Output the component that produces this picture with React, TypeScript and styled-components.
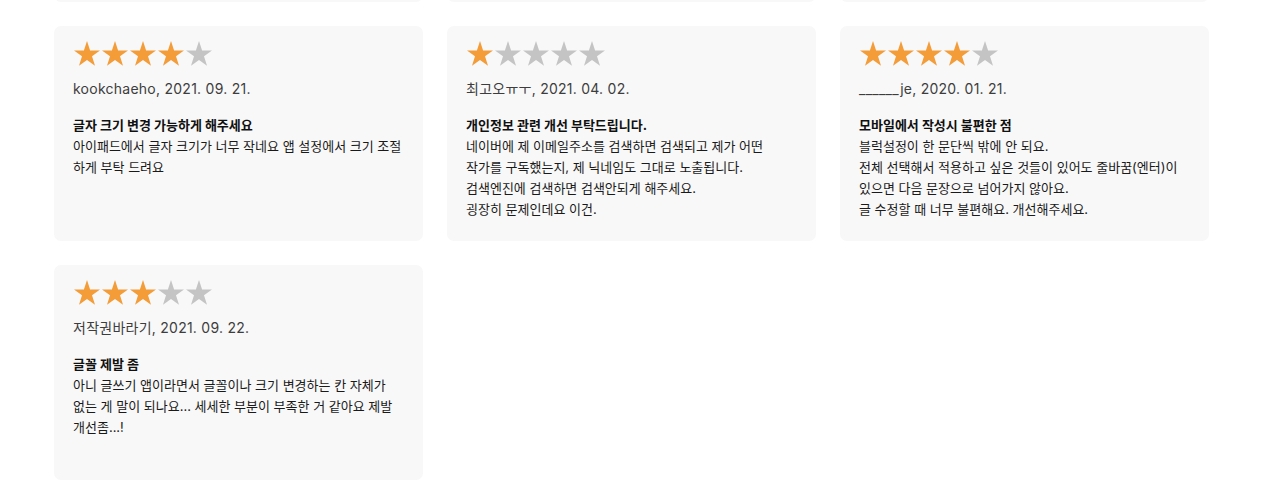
import React from "react";
import styled, { createGlobalStyle } from "styled-components";

const Global = createGlobalStyle`
  html, body { margin: 0; padding: 0; background: #ffffff; }
  body { font-family: "Inter", "Noto Sans CJK KR", sans-serif; overflow: hidden; }
`;

const Page = styled.div`
  height: 492px;
  overflow: hidden;
  padding-left: 54px;
`;

const Grid = styled.div`
  display: grid;
  grid-template-columns: repeat(3, 369px);
  grid-auto-rows: 215px;
  gap: 24px;
  margin-top: -213px;
`;

const Card = styled.div`
  background: #f8f8f8;
  border-radius: 7px;
  padding: 14px 19px;
  box-sizing: border-box;
  display: flex;
  flex-direction: column;
`;

const Stars = styled.div`
  display: flex;
  height: 28px;
`;

const Author = styled.div`
  margin-top: 11px;
  font-size: 14px;
  line-height: 20px;
  color: #3d3d3d;
  letter-spacing: 0.25px;
`;

const Title = styled.div`
  margin-top: 16px;
  font-size: 13px;
  line-height: 21px;
  font-weight: 700;
  color: #111;
`;

const Body = styled.div`
  font-size: 13px;
  line-height: 21px;
  color: #1a1a1a;
  white-space: pre-line;
`;

const Star = ({ on }: { on: boolean }) => (
  <svg width="28" height="28" viewBox="0 0 28 28">
    <polygon
      points="14,1 17.1,10.4 27,10.4 19,16.3 22,25.8 14,20 6,25.8 9,16.3 1,10.4 10.9,10.4"
      fill={on ? "#f39c38" : "#c4c4c4"}
    />
  </svg>
);

type Review = { rating: number; author: string; date: string; title: string; body: string };

const reviews: Review[] = [
  {
    rating: 4,
    author: "kookchaeho",
    date: "2021. 09. 21.",
    title: "글자 크기 변경 가능하게 해주세요",
    body: "아이패드에서 글자 크기가 너무 작네요 앱 설정에서 크기 조절\n하게 부탁 드려요",
  },
  {
    rating: 1,
    author: "최고오ㅠㅜ",
    date: "2021. 04. 02.",
    title: "개인정보 관련 개선 부탁드립니다.",
    body:
      "네이버에 제 이메일주소를 검색하면 검색되고 제가 어떤\n작가를 구독했는지, 제 닉네임도 그대로 노출됩니다.\n검색엔진에 검색하면 검색안되게 해주세요.\n굉장히 문제인데요 이건.",
  },
  {
    rating: 4,
    author: "______je",
    date: "2020. 01. 21.",
    title: "모바일에서 작성시 불편한 점",
    body:
      "블럭설정이 한 문단씩 밖에 안 되요.\n전체 선택해서 적용하고 싶은 것들이 있어도 줄바꿈(엔터)이\n있으면 다음 문장으로 넘어가지 않아요.\n글 수정할 때 너무 불편해요. 개선해주세요.",
  },
  {
    rating: 3,
    author: "저작권바라기",
    date: "2021. 09. 22.",
    title: "글꼴 제발 좀",
    body:
      "아니 글쓰기 앱이라면서 글꼴이나 크기 변경하는 칸 자체가\n없는 게 말이 되나요... 세세한 부분이 부족한 거 같아요 제발\n개선좀...!",
  },
];

const ReviewCard = ({ r }: { r: Review }) => (
  <Card>
    <Stars>
      {[0, 1, 2, 3, 4].map((i) => (
        <Star key={i} on={i < r.rating} />
      ))}
    </Stars>
    <Author>
      {r.author}, {r.date}
    </Author>
    <Title>{r.title}</Title>
    <Body>{r.body}</Body>
  </Card>
);

export default function App() {
  return (
    <>
      <Global />
      <Page>
        <Grid>
          <Card />
          <Card />
          <Card />
          {reviews.map((r, i) => (
            <ReviewCard key={i} r={r} />
          ))}
        </Grid>
      </Page>
    </>
  );
}
